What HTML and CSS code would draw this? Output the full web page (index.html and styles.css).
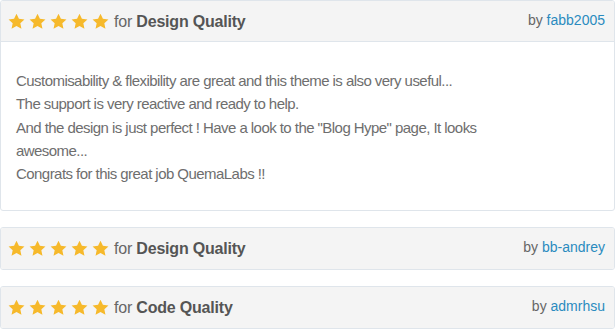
FILE: index.html
```html
<!DOCTYPE html>
<html>
<head>
<meta charset="utf-8">
<link rel="stylesheet" href="styles.css">
</head>
<body>
<svg width="0" height="0" class="defs">
  <defs>
    <symbol id="star" viewBox="0 0 24 24">
      <path d="M12 1l3.4 7.1 7.8.9-5.8 5.4 1.6 7.9L12 18.4l-7 3.9 1.6-7.9L.8 9l7.8-.9z"/>
    </symbol>
  </defs>
</svg>
<div class="reviews">
  <div class="review">
    <div class="review-head">
      <div class="rating">
        <span class="stars">
          <svg class="star"><use href="#star"/></svg><svg class="star"><use href="#star"/></svg><svg class="star"><use href="#star"/></svg><svg class="star"><use href="#star"/></svg><svg class="star"><use href="#star"/></svg>
        </span>
        <span class="for">for <strong>Design Quality</strong></span>
      </div>
      <div class="author">by <a href="#">fabb2005</a></div>
    </div>
    <div class="review-body">
      <p>Customisability &amp; flexibility are great and this theme is also very useful...<br>
      The support is very reactive and ready to help.<br>
      And the design is just perfect ! Have a look to the "Blog Hype" page, It looks<br>
      awesome...<br>
      Congrats for this great job QuemaLabs !!</p>
    </div>
  </div>
  <div class="review">
    <div class="review-head solo">
      <div class="rating">
        <span class="stars">
          <svg class="star"><use href="#star"/></svg><svg class="star"><use href="#star"/></svg><svg class="star"><use href="#star"/></svg><svg class="star"><use href="#star"/></svg><svg class="star"><use href="#star"/></svg>
        </span>
        <span class="for">for <strong>Design Quality</strong></span>
      </div>
      <div class="author">by <a href="#">bb-andrey</a></div>
    </div>
  </div>
  <div class="review">
    <div class="review-head solo">
      <div class="rating">
        <span class="stars">
          <svg class="star"><use href="#star"/></svg><svg class="star"><use href="#star"/></svg><svg class="star"><use href="#star"/></svg><svg class="star"><use href="#star"/></svg><svg class="star"><use href="#star"/></svg>
        </span>
        <span class="for">for <strong>Code Quality</strong></span>
      </div>
      <div class="author">by <a href="#">admrhsu</a></div>
    </div>
  </div>
</div>
</body>
</html>
```
FILE: styles.css
```css
html, body {
  margin: 0;
  padding: 0;
  background: #fff;
}
.defs {
  position: absolute;
  width: 0;
  height: 0;
}
.reviews {
  width: 615px;
  display: flex;
  flex-direction: column;
  gap: 16px;
  font-family: "Liberation Sans", Arial, sans-serif;
}
.review {
  border: 1px solid #dfe5eb;
  border-radius: 3px;
  background: #fff;
  overflow: hidden;
}
.review-head {
  height: 41px;
  box-sizing: border-box;
  background: #f4f4f4;
  border-bottom: 1px solid #dfe5eb;
  display: flex;
  align-items: center;
  justify-content: space-between;
  padding: 1px 9px 0 7px;
}
.review-head.solo {
  border-bottom: none;
}
.rating {
  display: flex;
  align-items: center;
}
.stars {
  display: flex;
  gap: 4px;
  margin-right: 5px;
  margin-top: -1px;
}
.star {
  width: 17px;
  height: 17px;
  fill: #f6b92b;
}
.for {
  font-size: 16px;
  color: #666;
  letter-spacing: -0.2px;
}
.for strong {
  font-weight: bold;
  color: #555;
}
.author {
  font-size: 14px;
  color: #666;
  margin-top: -4px;
}
.author a {
  color: #2a8bbf;
  text-decoration: none;
}
.review-body {
  padding: 27px 14px 17px 15px;
  min-height: 168px;
  box-sizing: border-box;
}
.review-body p {
  margin: 0;
  font-size: 15px;
  line-height: 23.3px;
  letter-spacing: -0.55px;
  color: #6e6e6e;
}
```
